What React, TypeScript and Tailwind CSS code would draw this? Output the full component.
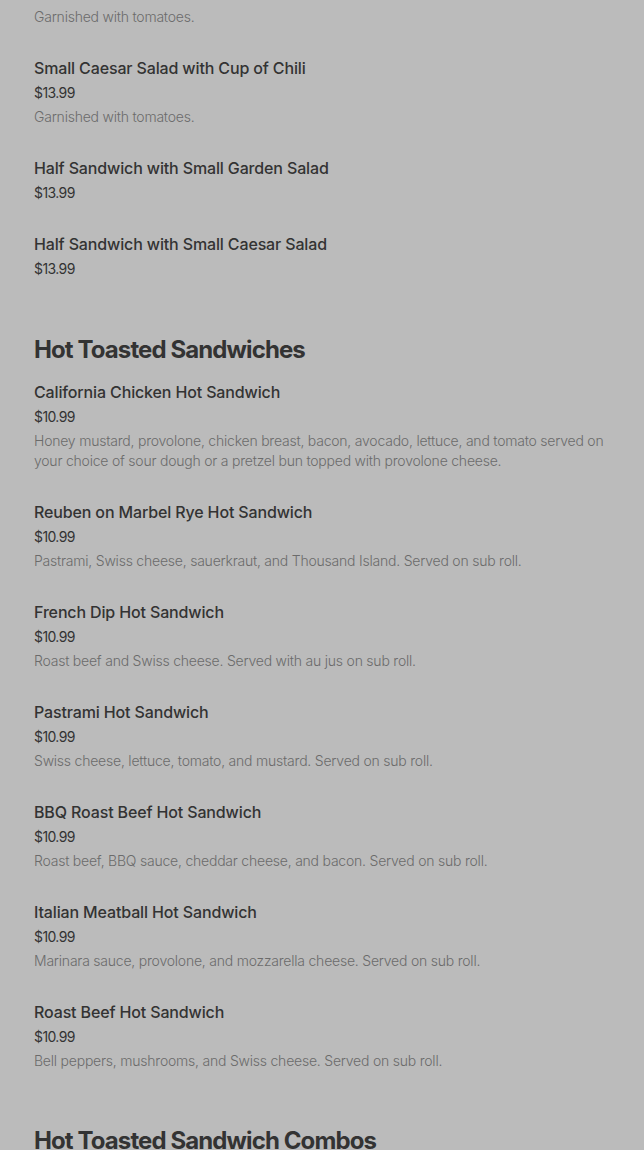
import React from "react";

type Item = { name: string; price: string; desc?: string };

const first: Item[] = [
  { name: "Small Caesar Salad with Cup of Chili", price: "$13.99", desc: "Garnished with tomatoes." },
  { name: "Half Sandwich with Small Garden Salad", price: "$13.99" },
  { name: "Half Sandwich with Small Caesar Salad", price: "$13.99" },
];

const hot: Item[] = [
  {
    name: "California Chicken Hot Sandwich",
    price: "$10.99",
    desc: "Honey mustard, provolone, chicken breast, bacon, avocado, lettuce, and tomato served on your choice of sour dough or a pretzel bun topped with provolone cheese.",
  },
  { name: "Reuben on Marbel Rye Hot Sandwich", price: "$10.99", desc: "Pastrami, Swiss cheese, sauerkraut, and Thousand Island. Served on sub roll." },
  { name: "French Dip Hot Sandwich", price: "$10.99", desc: "Roast beef and Swiss cheese. Served with au jus on sub roll." },
  { name: "Pastrami Hot Sandwich", price: "$10.99", desc: "Swiss cheese, lettuce, tomato, and mustard. Served on sub roll." },
  { name: "BBQ Roast Beef Hot Sandwich", price: "$10.99", desc: "Roast beef, BBQ sauce, cheddar cheese, and bacon. Served on sub roll." },
  { name: "Italian Meatball Hot Sandwich", price: "$10.99", desc: "Marinara sauce, provolone, and mozzarella cheese. Served on sub roll." },
  { name: "Roast Beef Hot Sandwich", price: "$10.99", desc: "Bell peppers, mushrooms, and Swiss cheese. Served on sub roll." },
];

function MenuItem({ item }: { item: Item }) {
  return (
    <div className="flex flex-col">
      <div className="text-[16px] leading-[24px] font-medium tracking-[-0.14px] text-[#333333]">{item.name}</div>
      <div className="mt-[3px] text-[14px] leading-[20px] tracking-[-0.6px] text-[#333333]">{item.price}</div>
      {item.desc && (
        <div className="mt-[4px] text-[14px] leading-[20px] font-light tracking-[-0.22px] text-[#6b6b6b]">{item.desc}</div>
      )}
    </div>
  );
}

export default function App() {
  return (
    <div
      className="h-[1150px] overflow-hidden bg-[#bbbbbb] pl-[34px] pr-[30px]"
      style={{ fontFamily: "Inter, 'Noto Sans', sans-serif" }}
    >
      <div className="pt-[7px] text-[14px] leading-[20px] font-light tracking-[-0.22px] text-[#6b6b6b]">Garnished with tomatoes.</div>
      <div className="mt-[29px] flex flex-col gap-[29px]">
        {first.map((it) => (
          <MenuItem key={it.name} item={it} />
        ))}
      </div>
      <h2 className="mt-[55px] text-[24px] leading-[32px] font-bold tracking-[-0.9px] text-[#333333]">
        Hot Toasted Sandwiches
      </h2>
      <div className="mt-[14px] flex flex-col gap-[29px]">
        {hot.map((it) => (
          <MenuItem key={it.name} item={it} />
        ))}
      </div>
      <h2 className="mt-[54px] text-[24px] leading-[32px] font-bold tracking-[-0.9px] whitespace-nowrap text-[#333333]">
        Hot Toasted Sandwich Combos
      </h2>
    </div>
  );
}
